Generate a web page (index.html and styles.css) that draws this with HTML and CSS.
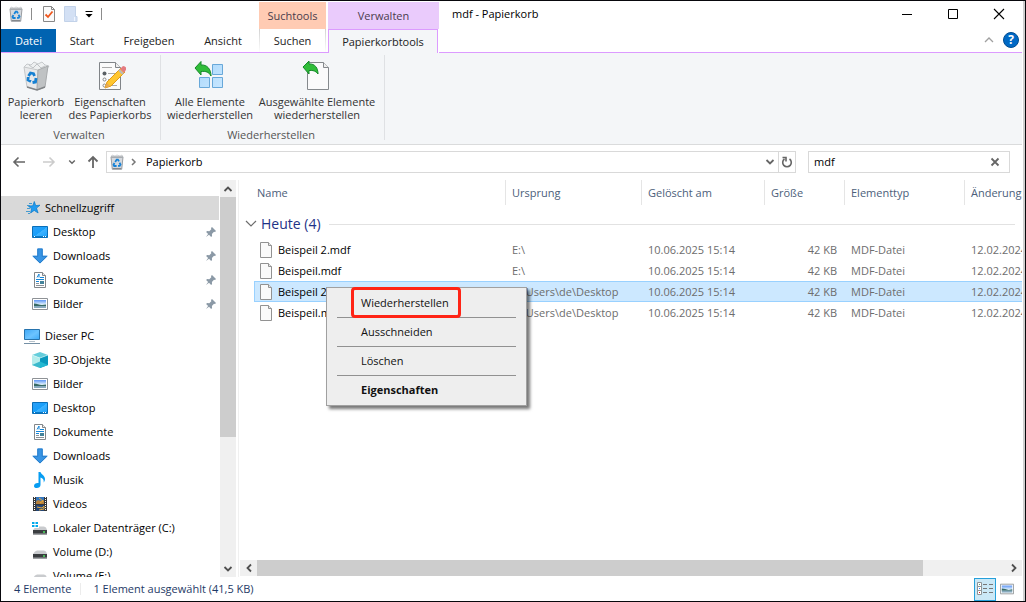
FILE: index.html
```html
<!DOCTYPE html>
<html lang="de">
<head>
<meta charset="utf-8">
<title>mdf - Papierkorb</title>
<link rel="stylesheet" href="styles.css">
</head>
<body>
<svg class="sprite" aria-hidden="true">
  <linearGradient id="gBlue" x1="0" y1="0" x2="1" y2="1"><stop offset="0" stop-color="#2f9ff5"/><stop offset=".5" stop-color="#18a0fb"/><stop offset=".52" stop-color="#3fb3ff"/><stop offset="1" stop-color="#189ffb"/></linearGradient>
  <linearGradient id="gScreen" x1="0" y1="0" x2="1" y2="1"><stop offset="0" stop-color="#3ea7f5"/><stop offset=".55" stop-color="#6cc3ff"/><stop offset="1" stop-color="#3ba9f8"/></linearGradient>
  <linearGradient id="gSky" x1="0" y1="0" x2="0" y2="1"><stop offset="0" stop-color="#5c94f5"/><stop offset=".55" stop-color="#dff0fc"/></linearGradient>
  <linearGradient id="gTile" x1="0" y1="0" x2="1" y2="1"><stop offset="0" stop-color="#a9d7fb"/><stop offset="1" stop-color="#c8e7ff"/></linearGradient>
  <symbol id="bin" viewBox="0 0 16 16"><path d="M2 3 3 1l3 1 2-1 3 1 2-1 1 2z" fill="#eceef0" stroke="#b9bcc0" stroke-width=".6"/><path d="M2 3h12l-1.3 12.3H3.3z" fill="#d5d9de" stroke="#999da2"/><path d="M2.5 3.5h11" stroke="#a9acb0"/><path d="M3.7 14.5h8.6" stroke="#85898d"/><g fill="none" stroke="#1683d8" stroke-width="1.8"><path d="m6.2 8 1.5-2.4h1.2L10 7.4M10.5 8.7l1 1.8-.8 1.4H9M7.6 12H5.2l-.7-1.3 1-1.7"/></g></symbol>
  <symbol id="pic" viewBox="0 0 16 16"><path d="M.5 2.5h15v11H.5z" fill="#fff" stroke="#8e9296"/><path d="M2 4h12v8H2z" fill="url(#gSky)"/><path d="M2 7.5c3 0 5 1.2 8 1.5l4-.6V10H2z" fill="#376a65"/><path d="M2 10h12v2H2z" fill="#87a9bd"/></symbol>
  <symbol id="desk" viewBox="0 0 16 16"><path d="M.5 2.5h15v11H.5z" fill="url(#gBlue)" stroke="#096fb9"/><path d="M1 12.5h14" stroke="#087ac7"/><path d="M2 12.5h1M11 12.5h1M13 12.5h1" stroke="#fff"/></symbol>
  <symbol id="down" viewBox="0 0 16 16"><path d="M5.3.5h5.4v7.3H16L8 15.6 0 7.8h5.3z" fill="#3894e4"/><path d="M5.8 1h4.4v7.3h4.6L8 15 1.2 8.3h4.6z" fill="none" stroke="#287fcc"/></symbol>
  <symbol id="doc" viewBox="0 0 16 16"><path d="M2.5.5h8l3 3v12h-11z" fill="#fff" stroke="#828689"/><path d="M10.5.5v3h3" fill="#eee" stroke="#828689"/><path d="M5 5.5 7 2v3.5M8 5.5h4M4 7.5h8M4 9.5h3" fill="none" stroke="#1686d8"/><path d="M8 9h4v3H8z" fill="#43839a"/><path d="M4 11.5h3M4 13.5h8" stroke="#8b9298"/></symbol>
  <symbol id="pin" viewBox="0 0 12 12"><path d="m7 1 4 4-1 1-1-.2-2.1 2.1.2 2-1 1L4 8.8 1 11l2.1-3L1.1 6l1-1 2.2.2 2-2L6 2z" fill="#8b99a6"/></symbol>
  <symbol id="star" viewBox="0 0 16 16"><path d="m9.300 1.500 1.400 4.100 4.300-.400-3.500 2.900 1.600 4.900-3.900-2.600L5.600 13l.900-4.200L3.300 6l4.500-.200z" fill="#219bf0" stroke="#0c78c6" stroke-width=".7"/><path d="M4 3.500h3M2 5.500h3M2 8.500h3M1 11.500h4M3 13.500h2" stroke="#459bd0"/></symbol>
  <symbol id="pc" viewBox="0 0 16 16"><path d="M.5 1.500h15v10H.5z" fill="url(#gScreen)" stroke="#2773ad"/><path d="M5 13.500h6" stroke="#b6c1ca"/><path d="M0 15.500h16" stroke="#7590a5"/></symbol>
  <symbol id="cube" viewBox="0 0 16 16"><path d="m0 3 8-3 8 3-8 3z" fill="#65cddb"/><path d="m0 3 8 3v10l-8-3z" fill="#b4edec"/><path d="m8 6 8-3v10l-8 3z" fill="#0998bd"/><path d="m0 13 8-3.500V16z" fill="#3bb9cc"/><path d="m8 9.500 8 3.500-8 3z" fill="#23b8d1"/><path d="m0 3 8 3 8-3" fill="none" stroke="#ddfafa" stroke-width=".6"/></symbol>
  <symbol id="music" viewBox="0 0 16 16"><path d="M6.500 0h2c.3 2 4.500 3.400 4.500 7 0 1.400-.6 2.600-1.300 3.400.4-2.600-.8-4.300-3.200-5V13c0 1.700-1.700 3-3.700 3-1.700 0-2.800-.8-2.800-2.100 0-1.800 2.100-3.200 4.500-2.800z" fill="#079df2"/></symbol>
  <symbol id="film" viewBox="0 0 16 16"><path d="M1 1h14v14H1z" fill="#353739"/><path d="M4 1h8v7H4z" fill="#3476bd"/><path d="M4 9h8v6H4z" fill="#244675"/><path d="M4 6c2-4 4 1 8-2v4H4z" fill="#b8813b"/><path d="m7 2 4 3-3 2M5 11l5 1 2-2v3l-5 1" fill="none" stroke="#e5a93f"/><path d="M2.500 1v14M13.500 1v14" stroke="#fff" stroke-dasharray="1 1"/></symbol>
  <symbol id="disk" viewBox="0 0 16 16"><path d="m3 7.500 2-1h7l2 1 1 2.500H1z" fill="#c9cbce"/><path d="M1 10h14v4.500H1z" fill="#3a3d40"/><path d="M1 14h14" stroke="#a2a5a8"/><path d="M11 12h2" stroke="#4ee361" stroke-width="1.400"/></symbol>
  <symbol id="win" viewBox="0 0 16 16"><path d="m3 7.500 2-1h7l2 1 1 2.500H1z" fill="#c9cbce"/><path d="M1 10h14v4.500H1z" fill="#3a3d40"/><path d="M1 14h14" stroke="#a2a5a8"/><path d="M11 12h2" stroke="#4ee361" stroke-width="1.400"/><path d="M-1 1h8v7h-8z" fill="#fff"/><path d="M0 2h2.500v2H0zm3.500 0H6v2H3.500zM0 5h2.500v2H0zm3.500 0H6v2H3.500z" fill="#00a9ec"/></symbol>
  <symbol id="page" viewBox="0 0 12 16"><path d="M.5.500h8l3 3v12H.5z" fill="#fafafa" stroke="#929292"/><path d="M8.500.500v3h3" fill="#e7e7e7" stroke="#929292"/></symbol>
  <symbol id="chev" viewBox="0 0 10 10"><path d="m1.500 3 3.500 3.500L8.500 3" fill="none" stroke="currentColor" stroke-width="1.800"/></symbol>
  <symbol id="thin" viewBox="0 0 12 10"><path d="m1 2 5 5 5-5" fill="none" stroke="currentColor" stroke-width="1.200"/></symbol>
</svg>
<div class="window">
  <header class="header">
    <div class="base">
      <div class="quick">
        <svg width="16" height="16"><use href="#bin"/></svg>
        <i class="tick"></i>
        <svg class="q-check" width="14" height="16" viewBox="0 0 14 16"><path d="M1.500.500h8l3 3v12h-11z" fill="#fafafa" stroke="#888"/><path d="M9.500.500v3h3" fill="none" stroke="#888"/><path d="m3.500 8.500 2.500 2.500 4.500-5.500" fill="none" stroke="#ee571e" stroke-width="1.800"/></svg>
        <svg class="q-new" width="14" height="16" viewBox="0 0 14 16"><path d="M.5.500h11v10h1.500v5H.500z" fill="#d3e0f4" stroke="#c2d2e9"/><path d="M10.500 11v4" stroke="#eff5ff"/></svg>
        <svg class="q-drop" width="8" height="8" viewBox="0 0 8 8"><path d="M.500 1.500h7" stroke="#000"/><path d="M.500 4h7L4 7.500z" fill="#000"/></svg>
        <i class="tick"></i>
      </div>
      <nav class="tabs">
        <button class="tab file">Datei</button><button class="tab start">Start</button><button class="tab share">Freigeben</button><button class="tab view">Ansicht</button>
      </nav>
    </div>
    <div class="context search-tools"><span class="context-name">Suchtools</span><button class="tab">Suchen</button></div>
    <div class="context bin-tools"><span class="context-name">Verwalten</span><button class="tab">Papierkorbtools</button></div>
    <div class="caption">
      <div class="title-row">
        <h1>mdf - Papierkorb</h1>
        <button class="win-btn" aria-label="Minimieren"><svg width="12" height="12" viewBox="0 0 12 12"><path d="M1 6.500h10" stroke="#000"/></svg></button>
        <button class="win-btn" aria-label="Maximieren"><svg width="12" height="12" viewBox="0 0 12 12"><path d="M1.500 1.500h9v9h-9z" fill="none" stroke="#000"/></svg></button>
        <button class="win-btn" aria-label="Schließen"><svg width="12" height="12" viewBox="0 0 12 12"><path d="m1 1 10 10M11 1 1 11" stroke="#000" stroke-width="1.100"/></svg></button>
      </div>
      <div class="help-row">
        <button aria-label="Menüband minimieren"><svg width="10" height="10" viewBox="0 0 10 10"><path d="m1 7 4-4 4 4" fill="none" stroke="#a0a0a0" stroke-width="1.300"/></svg></button>
        <button class="help" aria-label="Hilfe">?</button>
      </div>
    </div>
  </header>

  <section class="ribbon">
    <div class="group g1">
      <div class="commands">
        <button class="cmd c1"><svg width="32" height="32" viewBox="0 0 32 32"><path d="m4 7 3-3 4 1 3-3 4 2 4-2 3 3 4 1-3 4-12 2z" fill="#eef0f1" stroke="#c5c8cb"/><path d="m9 5 4 3 4-4 4 4 4-2" fill="none" stroke="#bfc2c5"/><path d="m4 7 14 3-1 20-10-3z" fill="#e8e9eb" stroke="#c5c8ca"/><path d="m18 10 10-4-3 21-8 3z" fill="#bfc2c4" stroke="#a7aaac"/><path d="m7 27 10 3 8-3" fill="none" stroke="#818487" stroke-width="1.500"/><g fill="none" stroke="#1680d2" stroke-width="2.800"><path d="m8.500 16 2-3 3 .600 1 2.500M16 18l-.500 4-3 .500M11 21.500 8 20l.200-3"/></g></svg><span>Papierkorb<br>leeren</span></button>
        <button class="cmd c2"><svg width="32" height="32" viewBox="0 0 32 32"><path d="M5.500 2.500h16l5 5v22h-21z" fill="#fbfbfb" stroke="#808488"/><path d="M21.500 2.500v5h5" fill="#eee" stroke="#808488"/><path d="M8 7.500h10M14 13.500h9M14 19.500h9M14 25.500h9" stroke="#aaa"/><circle cx="10.500" cy="13.500" r="2" fill="#5b6064"/><g fill="#fff" stroke="#888"><circle cx="10.500" cy="19.500" r="1.500"/><circle cx="10.500" cy="25.500" r="1.500"/></g><path d="m11 28 2-6L27 8l4 4-14 14z" fill="#ffc62f" stroke="#e19b16"/><path d="m11 28 2-5 3 3z" fill="#e7aa57"/><path d="m26 9 3-3q3 0 3.500 3L30 13z" fill="#e47b80"/><path d="m25 10 4 4" stroke="#b7bac0" stroke-width="2"/></svg><span>Eigenschaften<br>des Papierkorbs</span></button>
      </div>
      <span class="group-name">Verwalten</span>
    </div>
    <div class="group g2">
      <div class="commands">
        <button class="cmd c3"><svg width="32" height="32" viewBox="0 0 32 32"><g fill="url(#gTile)" stroke="#68a8d9"><path d="M18.500 4.500h10v10h-10zM5.500 17.500h10v10h-10zM18.500 17.500h10v10h-10z"/></g><path d="m1 8 6-6.500V5c6-.500 10 4 10 11-2-4-5-5-10-4.500V15z" fill="#30bd39" stroke="#15892a"/></svg><span>Alle Elemente<br>wiederherstellen</span></button>
        <button class="cmd c4"><svg width="32" height="32" viewBox="0 0 32 32"><path d="M6.500 2.500h16l5 5v22h-21z" fill="#fafafb" stroke="#85898d"/><path d="M22.500 2.500v5h5" fill="#eee" stroke="#85898d"/><path d="m2 7 6-6v3c6-.500 9 4 9 10-2-3-5-4-9-3.500V14z" fill="#30bd39" stroke="#15892a"/></svg><span>Ausgewählte Elemente<br>wiederherstellen</span></button>
      </div>
      <span class="group-name">Wiederherstellen</span>
    </div>
  </section>

  <div class="nav">
    <div class="arrows">
      <button aria-label="Zurück"><svg width="16" height="16" viewBox="0 0 16 16"><path d="M14 8H3m4.500-4.500L3 8l4.500 4.500" fill="none" stroke="#666" stroke-width="1.600"/></svg></button>
      <button class="fwd" aria-label="Vorwärts"><svg width="16" height="16" viewBox="0 0 16 16"><path d="M2 8h11M8.500 3.500 13 8l-4.500 4.500" fill="none" stroke="#ccc" stroke-width="1.600"/></svg></button>
      <button class="recent" aria-label="Zuletzt besuchte Orte"><svg width="8" height="8"><use href="#chev"/></svg></button>
      <button class="up" aria-label="Nach oben"><svg width="16" height="16" viewBox="0 0 16 16"><path d="M8 14V3M3.500 7.500 8 3l4.500 4.500" fill="none" stroke="#666" stroke-width="1.800"/></svg></button>
    </div>
    <div class="address">
      <svg width="16" height="16"><use href="#bin"/></svg>
      <svg class="crumb" width="8" height="10" viewBox="0 0 8 10"><path d="m2 2 3 3-3 3" fill="none" stroke="#777" stroke-width="1.500"/></svg>
      <a href="#">Papierkorb</a>
      <button class="history" aria-label="Verlauf"><svg width="10" height="10"><use href="#chev"/></svg></button>
      <button class="refresh" aria-label="Aktualisieren"><svg width="12" height="14" viewBox="0 0 12 14"><path d="M8.500 4A4.300 4.300 0 1 1 3.500 4M1.500 2.500H5v4" fill="none" stroke="#666" stroke-width="1.600"/></svg></button>
    </div>
    <div class="search"><input aria-label="Papierkorb durchsuchen" value="mdf"><button aria-label="Suche löschen"><svg width="10" height="10" viewBox="0 0 10 10"><path d="m1.500 1.500 7 7M8.500 1.500l-7 7" stroke="#666" stroke-width="1.800"/></svg></button></div>
  </div>

  <main class="main">
    <aside class="tree">
      <ul>
        <li class="root current"><svg><use href="#star"/></svg>Schnellzugriff</li>
        <li><svg><use href="#desk"/></svg>Desktop<svg class="pin"><use href="#pin"/></svg></li>
        <li><svg><use href="#down"/></svg>Downloads<svg class="pin"><use href="#pin"/></svg></li>
        <li><svg><use href="#doc"/></svg>Dokumente<svg class="pin"><use href="#pin"/></svg></li>
        <li><svg><use href="#pic"/></svg>Bilder<svg class="pin"><use href="#pin"/></svg></li>
      </ul>
      <ul>
        <li class="root"><svg><use href="#pc"/></svg>Dieser PC</li>
        <li><svg><use href="#cube"/></svg>3D-Objekte</li>
        <li><svg><use href="#pic"/></svg>Bilder</li>
        <li><svg><use href="#desk"/></svg>Desktop</li>
        <li><svg><use href="#doc"/></svg>Dokumente</li>
        <li><svg><use href="#down"/></svg>Downloads</li>
        <li><svg><use href="#music"/></svg>Musik</li>
        <li><svg><use href="#film"/></svg>Videos</li>
        <li><svg><use href="#win"/></svg>Lokaler Datenträger (C:)</li>
        <li><svg><use href="#disk"/></svg>Volume (D:)</li>
        <li><svg><use href="#disk"/></svg>Volume (E:)</li>
      </ul>
    </aside>
    <div class="vscroll">
      <button class="flip" aria-label="Nach oben blättern"><svg width="10" height="10"><use href="#chev"/></svg></button>
      <div class="track"><i class="thumb"></i></div>
      <button aria-label="Nach unten blättern"><svg width="10" height="10"><use href="#chev"/></svg></button>
    </div>
    <section class="files">
      <div class="list">
        <table>
          <colgroup><col class="k-gutter"><col class="k-name"><col class="k-origin"><col class="k-date"><col class="k-size"><col class="k-type"><col></colgroup>
          <thead><tr><td></td><th class="name">Name</th><th>Ursprung</th><th>Gelöscht am</th><th>Größe</th><th>Elementtyp</th><th>Änderungsdatum</th></tr></thead>
          <tbody>
            <tr class="heading"><td colspan="7"><div class="day"><svg width="12" height="10"><use href="#thin"/></svg><h2>Heute (4)</h2><i></i></div></td></tr>
            <tr><td></td><td class="name"><div><svg width="12" height="16"><use href="#page"/></svg>Beispeil 2.mdf</div></td><td>E:\</td><td>10.06.2025 15:14</td><td class="size">42 KB</td><td>MDF-Datei</td><td>12.02.2024</td></tr>
            <tr><td></td><td class="name"><div><svg width="12" height="16"><use href="#page"/></svg>Beispeil.mdf</div></td><td>E:\</td><td>10.06.2025 15:14</td><td class="size">42 KB</td><td>MDF-Datei</td><td>12.02.2024</td></tr>
            <tr class="selected"><td></td><td class="name"><div><svg width="12" height="16"><use href="#page"/></svg>Beispeil 2.mdf</div></td><td>C:\Users\de\Desktop</td><td>10.06.2025 15:14</td><td class="size">42 KB</td><td>MDF-Datei</td><td>12.02.2024</td></tr>
            <tr><td></td><td class="name"><div><svg width="12" height="16"><use href="#page"/></svg>Beispeil.mdf</div></td><td>C:\Users\de\Desktop</td><td>10.06.2025 15:14</td><td class="size">42 KB</td><td>MDF-Datei</td><td>12.02.2024</td></tr>
          </tbody>
        </table>
      </div>
      <div class="hscroll">
        <button class="left" aria-label="Nach links blättern"><svg width="10" height="10"><use href="#chev"/></svg></button>
        <div class="track"><i class="thumb"></i></div>
        <button class="right" aria-label="Nach rechts blättern"><svg width="10" height="10"><use href="#chev"/></svg></button>
      </div>
      <div class="menu" role="menu">
        <button class="marked" role="menuitem">Wiederherstellen</button><hr>
        <button role="menuitem">Ausschneiden</button><hr>
        <button role="menuitem">Löschen</button><hr>
        <button class="default" role="menuitem">Eigenschaften</button>
      </div>
    </section>
  </main>

  <footer class="status">
    <span>4 Elemente</span><i></i><span>1 Element ausgewählt (41,5 KB)</span>
    <button class="details" aria-label="Details"><svg width="18" height="16" viewBox="0 0 18 16"><path d="M1.500 1.500h4v4h-4zM1.500 5.500h4v4h-4zM1.500 9.500h4v4h-4z" fill="#fff" stroke="#8f9497"/><path d="M3 3.500h1" stroke="#597"/><path d="M3 7.500h1" stroke="#38f"/><path d="M3 11.500h1" stroke="#d22"/><path d="M7 3.500h4m2 0h4M7 7.500h4m2 0h4M7 11.500h4m2 0h4" stroke="#777"/></svg></button>
    <button class="large" aria-label="Große Symbole"><svg width="14" height="14"><use href="#pic"/></svg></button>
  </footer>
</div>
</body>
</html>
```

FILE: styles.css
```css
*, *::after { box-sizing: border-box; }
body { margin: 0; font: 11px/16px "Open Sans", "Noto Sans", sans-serif; color: #000; background: #c8c8c8; }
button { margin: 0; padding: 0; border: 0; background: none; font: inherit; color: inherit; display: flex; align-items: center; justify-content: center; }
svg { display: block; flex: none; }
.sprite { position: absolute; width: 0; height: 0; }

.window { display: flex; flex-direction: column; height: 100vh; overflow: hidden; background: #fff; border: 1px solid #08080c; box-shadow: inset -2px 0 #cfcfcf; padding-right: 3px; }

/* Title bar and tabs */
.header { display: flex; flex: none; height: 52px; color: #222; }
.base { display: flex; flex-direction: column; width: 258px; border-bottom: 1px solid #dc9bff; }
.quick { display: flex; align-items: center; height: 28px; padding: 0 0 2px 7px; }
.tick { width: 1px; height: 12px; margin-left: 7px; background: #8c8c8c; }
.q-check { margin-left: 10px; }
.q-new { margin-left: 8px; }
.q-drop { margin-left: 7px; }
.quick .q-drop + .tick { margin-left: 8px; }
.tabs { display: flex; flex: 1; }
.tab { height: 23px; padding-top: 1px; }
.file { width: 55px; background: #0063b1; color: #fff; }
.start { width: 52px; }
.share { width: 82px; }
.view { width: 66px; }
.context { display: flex; flex-direction: column; padding-top: 1px; text-align: center; }
.context-name { height: 27px; line-height: 28px; color: #4a3d4d; }
.search-tools { width: 67px; border-bottom: 1px solid #dc9bff; }
.search-tools .context-name { background: #ffcbb3; }
.search-tools .tab { border: solid; border-width: 0 1px; border-image: linear-gradient(#d0d0d0, #fff) 1; }
.bin-tools { width: 113px; padding-left: 2px; background: linear-gradient(#dc9bff, #dc9bff) left bottom / 2px 1px no-repeat; }
.bin-tools .context-name { background: #eacbfc; }
.bin-tools .tab { height: 24px; margin-right: 1px; padding: 0; border: 1px solid #dc9bff; border-bottom: 0; background: #f4f6f8; }
.caption { display: flex; flex-direction: column; flex: 1; border-bottom: 1px solid #dc9bff; }
.title-row { display: flex; align-items: center; height: 26px; }
h1 { flex: 1; margin: 0; padding-left: 13px; font-size: 11px; font-weight: 400; color: #000; }
.win-btn { width: 46px; height: 26px; }
.help-row { display: flex; align-items: center; justify-content: flex-end; gap: 9px; height: 25px; padding-right: 3px; }
.help { width: 16px; height: 16px; border-radius: 8px; background: #0069c5; border: 1px solid #004c91; color: #fff; font-size: 12px; font-weight: 700; }

/* Ribbon */
.ribbon { display: flex; flex: none; height: 92px; background: #f4f6f8; border-bottom: 1px solid #dadbdc; padding: 2px 0 4px; color: #333; }
.group { display: flex; flex-direction: column; border-right: 1px solid #dfe1e4; }
.commands { display: flex; }
.cmd { flex-direction: column; justify-content: flex-start; padding-top: 5px; line-height: 13px; gap: 3px; white-space: nowrap; }
.g1 { width: 160px; }
.g2 { width: 224px; }
.c1 { width: 70px; }
.c2 { width: 78px; }
.c3 { width: 98px; }
.c4 { width: 116px; }
.group-name { margin-top: 6px; padding-right: 3px; text-align: center; color: #555; }

/* Navigation bar */
.nav { display: flex; align-items: center; flex: none; height: 35px; padding: 0 12px 2px 0; }
.arrows { display: flex; align-items: center; width: 105px; padding-left: 10px; color: #666; }
.fwd { margin-left: 14px; }
.recent { margin-left: 11px; }
.up { margin-left: 9px; }
.address { display: flex; align-items: center; flex: 1; height: 22px; border: 1px solid #d9d9d9; padding-left: 2px; }
.crumb { margin: 0 8px 0 5px; }
.address a { flex: 1; color: #000; text-decoration: none; }
.history { width: 17px; height: 20px; color: #666; }
.refresh { width: 17px; height: 20px; border-left: 1px solid #d9d9d9; }
.search { display: flex; width: 202px; height: 22px; margin-left: 12px; border: 1px solid #d9d9d9; }
.search input { flex: 1; min-width: 0; padding: 0 5px; border: 0; outline: 0; font: inherit; background: none; }
.search button { width: 28px; }

/* Folder tree */
.main { display: flex; flex: 1; min-height: 0; }
.tree { width: 219px; padding-top: 16px; overflow: hidden; }
.tree ul { list-style: none; margin: 0 0 8px; padding: 0; }
.tree li { display: flex; align-items: center; gap: 5px; height: 24px; padding: 0 3px 0 31px; }
.tree .root { padding-left: 23px; }
.tree .current { background: #d9d9d9; padding-left: 24px; gap: 4px; margin-right: 1px; }
.tree li svg { width: 16px; height: 16px; }
.tree li .pin { width: 12px; height: 12px; margin-left: auto; }
.vscroll { display: flex; flex-direction: column; width: 16px; background: #f0f0f0; color: #505050; }
.vscroll button { height: 17px; }
.flip svg { transform: rotate(180deg); }
.track { flex: 1; display: flex; }
.thumb { background: #cdcdcd; }
.vscroll .thumb { width: 100%; height: 66%; }

/* File list */
.files { position: relative; display: flex; flex-direction: column; flex: 1; min-width: 0; margin-left: 2px; border-left: 1px solid #f0f0f0; padding-left: 1px; }
.list { flex: 1; overflow: hidden; }
table { width: 100%; table-layout: fixed; border-collapse: separate; border-spacing: 0; color: #6d6d6d; }
.k-gutter { width: 14px; }
.k-name { width: 252px; }
.k-origin { width: 136px; }
.k-date { width: 123px; }
.k-size { width: 80px; }
.k-type { width: 120px; }
th, td { padding: 0 0 0 6px; overflow: hidden; white-space: nowrap; text-align: left; font-weight: 400; }
thead td, tbody td:first-child { padding: 0; }
th { height: 25px; border-right: 1px solid #e5e5e5; color: #4c607a; }
th:last-child { border-right: 0; }
th.name { padding-left: 3px; }
tbody td { height: 21px; }
.heading td { height: 34px; }
.day { display: flex; align-items: center; padding: 4px 7px 0 5px; }
.day svg { color: #6d6d6d; }
.day h2 { margin: 0 8px 0 4px; font-size: 14px; line-height: 20px; font-weight: 400; color: #1e3287; }
.day i { flex: 1; height: 1px; background: #e2e2e2; }
td.name { color: #000; }
td.name div { display: flex; align-items: center; gap: 6px; }
.size { text-align: right; padding-right: 8px; }
.selected td + td { background: #cce8ff; border: solid #99d1ff; border-width: 1px 0; }
.selected td.name { border-left-width: 1px; padding-left: 5px; }
.hscroll { display: flex; height: 16px; margin-bottom: 1px; background: #f0f0f0; color: #505050; }
.hscroll button { width: 17px; }
.hscroll .thumb { width: 89%; }
.left svg { transform: rotate(90deg); }
.right svg { transform: rotate(-90deg); }

/* Context menu */
.menu { position: absolute; left: 87px; top: 107px; width: 201px; padding: 1px 0; background: #eee; border: 1px solid #a0a0a0; box-shadow: 3px 3px 3px #0008; }
.menu button { position: relative; width: 100%; height: 28px; padding-left: 34px; justify-content: flex-start; color: #111; }
.menu hr { height: 1px; margin: 0 10px; border: 0; background: #919191; }
.menu .default { font-weight: 700; }
.marked::after { content: ""; position: absolute; left: 24px; top: -2px; width: 110px; height: 31px; border: 3px solid #ff2416; border-radius: 4px; }

/* Status bar */
.status { display: flex; align-items: center; flex: none; height: 24px; padding: 0 8px 0 13px; color: #1e3a66; }
.status i { width: 1px; height: 12px; margin: 0 12px 0 9px; background: #ececec; }
.details { width: 22px; height: 23px; margin-left: auto; border: 1px solid #26a0da; background: #cbe8f6; }
.large { margin-left: 4px; }
```
